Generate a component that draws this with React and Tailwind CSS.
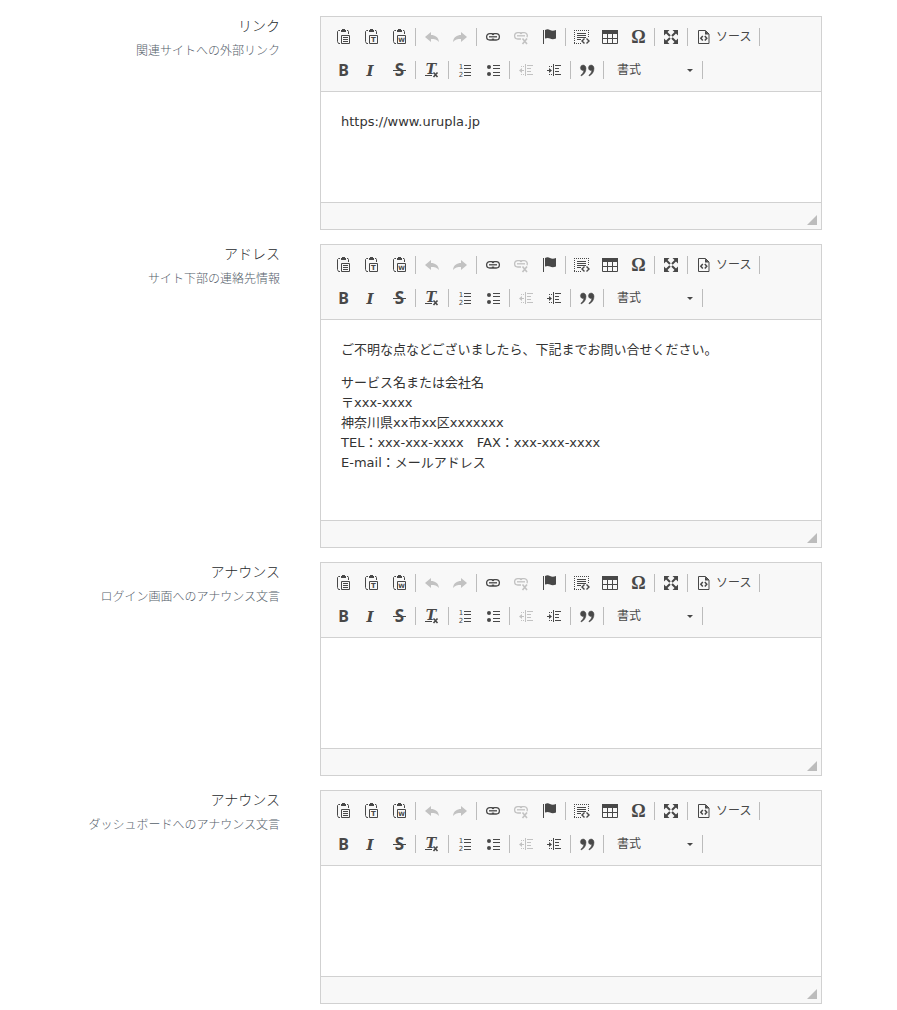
import React from 'react';

const iconClass = 'block size-4 shrink-0 overflow-visible';

function Svg({ children }) {
    return (
        <svg className={iconClass} viewBox="0 0 16 16" fill="none" stroke="currentColor" aria-hidden="true">
            {children}
        </svg>
    );
}

function Letter({ children, x = 8, y = 13, size = 15, family = 'Noto Sans', italic = false, weight = 700 }) {
    return (
        <text
            x={x}
            y={y}
            fontSize={size}
            fontFamily={`"${family}", sans-serif`}
            fontWeight={weight}
            fontStyle={italic ? 'italic' : 'normal'}
            textAnchor="middle"
            fill="currentColor"
            stroke="none"
        >
            {children}
        </text>
    );
}

function Clipboard({ children }) {
    return (
        <Svg>
            <path d="M5 1.500H3.500L2.500 2.500V12.500L3.500 14.500H5M12 1.500h1l.5 1V5" />
            <path d="M6 3V1h1V0h3v1h1v2z" fill="currentColor" stroke="none" />
            <path d="M6.500 6.500h8v8h-8z" />
            {children}
        </Svg>
    );
}

const icons = {
    paste: <Clipboard><path d="M8 8.500h5M8 10.500h5M8 12.500h5" /></Clipboard>,
    pasteText: <Clipboard><Letter x={10.5} y={13} size={7} family="DejaVu Sans">T</Letter></Clipboard>,
    pasteWord: <Clipboard><Letter x={10.5} y={13} size={6} family="DejaVu Sans">W</Letter></Clipboard>,
    undo: <Svg><path d="M1 8 7 3v3c4 0 7.500 2 8 7-2-2.500-4.500-3-8-3v3z" fill="currentColor" stroke="none" /></Svg>,
    redo: <Svg><path d="M15 8 9 3v3c-4 0-7.500 2-8 7 2-2.500 4.500-3 8-3v3z" fill="currentColor" stroke="none" /></Svg>,
    link: (
        <Svg>
            <path strokeWidth="1.300" d="M8.700 6C8.500 5 8 4.600 7 4.600H4.800a3.200 3.200 0 0 0 0 6.400H7c1 0 1.500-.4 1.700-1.400M7.300 6c.2-1 .7-1.400 1.700-1.400h2.200a3.200 3.200 0 0 1 0 6.400H9c-1 0-1.500-.4-1.700-1.400" />
            <path d="M4 7.800h8" strokeWidth="1.300" />
        </Svg>
    ),
    unlink: (
        <Svg>
            <path strokeWidth="1.300" d="M8.700 5C8.500 4 8 3.600 7 3.600H4.800a3.200 3.200 0 0 0 0 6.400H8M7.300 5c.2-1 .7-1.400 1.700-1.400h2.200a3.200 3.200 0 0 1 2.800 4.600" />
            <path d="M4 6.800h8" strokeWidth="1.300" />
            <path d="m9.500 9.500 4.500 5.500M14 9.500l-4.500 5.500" strokeWidth="1.600" />
        </Svg>
    ),
    anchor: (
        <Svg>
            <path d="M2.500 1v14" />
            <path d="M4 1c2-1 3.500-.8 5 0s3.500 1 6 0v8.500c-2.500 1-4.500.8-6 0s-3-.8-5 0z" fill="currentColor" stroke="none" />
        </Svg>
    ),
    selectAll: (
        <Svg>
            <path strokeDasharray="1 1" d="M0 1.500h15M0 3.500h1M14 3.500h1M0 14.500h8M.5 1v14M14.500 1v8" />
            <path d="M3 4.500h9M3 6.500h9M3 8.500h9M3 10.500h4" />
            <path strokeWidth="1.400" d="m10.500 9.500-2.500 2.500 2.500 2.500M12.500 9.500 15 12l-2.500 2.500" />
        </Svg>
    ),
    table: (
        <Svg>
            <path d="M0 1h16v4H0z" fill="currentColor" stroke="none" />
            <path d="M.5 4.500h15v10H.5zM5.500 5v9M10.500 5v9M0 9.500h16" />
        </Svg>
    ),
    specialChar: <Svg><Letter x={8.5} y={14} size={18} family="Liberation Serif">Ω</Letter></Svg>,
    maximize: (
        <Svg>
            <path d="M1 1h5.500L1 6.500zM15 1v5.500L9.500 1zM1 15V9.500L6.500 15zM15 15H9.500L15 9.500z" fill="currentColor" stroke="none" />
            <path strokeWidth="2" d="m3 3 4 4M13 3 9 7M3 13l4-4M13 13 9 9" />
        </Svg>
    ),
    source: (
        <Svg>
            <path d="M2.500 1.500h7l3.500 3.500v9.500H2.500z" />
            <path d="M9 1.500v4h4z" fill="currentColor" stroke="none" />
            <path strokeWidth="1.500" d="M6.800 7 4.800 9.200l2 2.300M8.800 7l2 2.200-2 2.300" />
        </Svg>
    ),
    bold: <Svg><Letter x={8.5} y={14} size={16}>B</Letter></Svg>,
    italic: <Svg><Letter x={7} y={14} size={15} family="DejaVu Serif" italic>I</Letter></Svg>,
    strike: (
        <Svg>
            <Letter x={8.5} y={14} size={17}>S</Letter>
            <path d="M2 8.500h13" />
        </Svg>
    ),
    removeFormat: (
        <Svg>
            <Letter x={7} y={12} size={14} family="DejaVu Serif" italic>T</Letter>
            <path d="M1 13.500h7" />
            <path strokeWidth="1.600" d="m9.500 10.500 4 4.500M13.500 10.500l-4 4.500" />
        </Svg>
    ),
    numberedList: (
        <Svg>
            <Letter x={4} y={7} size={7} family="DejaVu Sans" weight={400}>1</Letter>
            <Letter x={4} y={15} size={7} family="DejaVu Sans" weight={400}>2</Letter>
            <path d="M7 3.500h7M7 6.500h7M7 10.500h7M7 13.500h7" />
        </Svg>
    ),
    bulletedList: (
        <Svg>
            <circle cx="4" cy="5" r="2" fill="currentColor" stroke="none" />
            <circle cx="4" cy="12" r="2" fill="currentColor" stroke="none" />
            <path d="M8 3.500h7M8 6.500h7M8 10.500h7M8 13.500h7" />
        </Svg>
    ),
    outdent: (
        <Svg>
            <path d="M7.500 2v12M9 3.500h6M9 6.500h4M9 9.500h4M9 12.500h6M2 8.500h4M3 4.500h1M5 4.500h1M3 12.500h1M5 12.500h1" />
            <path d="M1 8.500 4 6v5z" fill="currentColor" stroke="none" />
        </Svg>
    ),
    indent: (
        <Svg>
            <path d="M7.500 2v12M9 3.500h6M9 6.500h4M9 9.500h4M9 12.500h6M1 8.500h4M3 4.500h1M5 4.500h1M3 12.500h1M5 12.500h1" />
            <path d="M6 8.500 3 6v5z" fill="currentColor" stroke="none" />
        </Svg>
    ),
    quote: (
        <Svg>
            <path
                d="M4 3a2.800 2.800 0 0 0-.5 5.500c.5.100 1 .1 1.300 0C4.500 10.500 3.500 12 2 13v1c3-1.200 5-4 5-7.500C7 4.500 5.800 3 4 3zM12 3a2.800 2.800 0 0 0-.5 5.500c.5.100 1 .1 1.300 0-.3 2-1.300 3.500-2.800 4.500v1c3-1.200 5-4 5-7.500C15 4.500 13.800 3 12 3z"
                fill="currentColor"
                stroke="currentColor"
                strokeWidth="0.500"
            />
        </Svg>
    ),
};

const topRow = [
    [
        { icon: 'paste', title: '貼り付け' },
        { icon: 'pasteText', title: 'プレーンテキスト貼り付け' },
        { icon: 'pasteWord', title: 'ワード文章から貼り付け' },
    ],
    [
        { icon: 'undo', title: '元に戻す', disabled: true },
        { icon: 'redo', title: 'やり直す', disabled: true },
    ],
    [
        { icon: 'link', title: 'リンク挿入/編集' },
        { icon: 'unlink', title: 'リンクを削除', disabled: true },
        { icon: 'anchor', title: 'アンカー挿入/編集' },
    ],
    [
        { icon: 'selectAll', title: 'すべて選択' },
        { icon: 'table', title: '表' },
        { icon: 'specialChar', title: '特殊文字挿入' },
    ],
    [{ icon: 'maximize', title: '最大化' }],
    [{ icon: 'source', title: 'ソース', label: 'ソース' }],
];

const bottomRow = [
    [
        { icon: 'bold', title: '太字' },
        { icon: 'italic', title: '斜体' },
        { icon: 'strike', title: '打ち消し線' },
    ],
    [{ icon: 'removeFormat', title: '書式を解除' }],
    [
        { icon: 'numberedList', title: '番号付きリスト' },
        { icon: 'bulletedList', title: '番号無しリスト' },
    ],
    [
        { icon: 'outdent', title: 'インデント解除', disabled: true },
        { icon: 'indent', title: 'インデント' },
    ],
    [{ icon: 'quote', title: 'ブロック引用文' }],
];

function ToolGroup({ items }) {
    return (
        <div className="flex items-center">
            {items.map(item => (
                <button
                    key={item.icon}
                    type="button"
                    title={item.title}
                    aria-label={item.title}
                    disabled={item.disabled}
                    className="flex h-7 items-center gap-1 px-1.5 text-xs hover:bg-[#e5e5e5] disabled:opacity-30"
                >
                    {icons[item.icon]}
                    {item.label && <span>{item.label}</span>}
                </button>
            ))}
            <Separator />
        </div>
    );
}

function Separator() {
    return <span className="mx-0.5 h-[18px] w-px bg-[#bcbcbc]" />;
}

function Toolbar() {
    return (
        <div className="flex flex-col gap-[5px] border-b border-[#d1d1d1] bg-[#f8f8f8] px-2 pt-1.5 pb-[7px] text-[#484848]">
            <div className="flex flex-wrap items-center">
                {topRow.map((items, i) => <ToolGroup key={i} items={items} />)}
            </div>
            <div className="flex flex-wrap items-center">
                {bottomRow.map((items, i) => <ToolGroup key={i} items={items} />)}
                <div className="relative">
                    <select
                        aria-label="書式"
                        className="block h-7 w-[94px] appearance-none bg-transparent pl-[11px] text-xs"
                    >
                        <option>書式</option>
                    </select>
                    <svg className="pointer-events-none absolute top-3 right-[7px] h-1 w-1.5" viewBox="0 0 6 4" fill="currentColor" aria-hidden="true">
                        <path d="M0 1h6L3 4z" />
                    </svg>
                </div>
                <Separator />
            </div>
        </div>
    );
}

function Editor({ id, bodyClass, children }) {
    return (
        <div className="min-w-0 flex-1 border border-[#d1d1d1] bg-white">
            <Toolbar />
            <div
                role="textbox"
                aria-multiline="true"
                aria-labelledby={id}
                contentEditable
                suppressContentEditableWarning
                className={`p-5 font-["DejaVu_Sans","Noto_Sans_CJK_JP",sans-serif] text-[13px] leading-5 text-[#333] outline-none ${bodyClass}`}
            >
                {children}
            </div>
            <div className="flex h-[27px] items-end justify-end border-t border-[#d1d1d1] bg-[#f8f8f8] p-1">
                <svg className="size-2.5 cursor-se-resize text-[#bcbcbc]" viewBox="0 0 10 10" fill="currentColor" aria-hidden="true">
                    <path d="M10 0v10H0z" />
                </svg>
            </div>
        </div>
    );
}

const fields = [
    {
        id: 'link',
        label: 'リンク',
        help: '関連サイトへの外部リンク',
        bodyClass: 'min-h-[110px]',
        content: <p>https://www.urupla.jp</p>,
    },
    {
        id: 'address',
        label: 'アドレス',
        help: 'サイト下部の連絡先情報',
        bodyClass: 'min-h-[200px]',
        content: (
            <>
                <p className="mb-[13px]">ご不明な点などございましたら、下記までお問い合せください。</p>
                <p>
                    サービス名または会社名<br />
                    〒xxx-xxxx<br />
                    神奈川県xx市xx区xxxxxxx<br />
                    TEL：xxx-xxx-xxxx　FAX：xxx-xxx-xxxx<br />
                    E-mail：メールアドレス
                </p>
            </>
        ),
    },
    { id: 'login-announce', label: 'アナウンス', help: 'ログイン画面へのアナウンス文言', bodyClass: 'min-h-[110px]' },
    { id: 'dashboard-announce', label: 'アナウンス', help: 'ダッシュボードへのアナウンス文言', bodyClass: 'min-h-[110px]' },
];

export default function App() {
    return (
        <form
            lang="ja"
            className='flex flex-col gap-3.5 bg-white pt-4 pr-[75px] font-["Noto_Sans","Noto_Sans_CJK_JP",sans-serif]'
        >
            {fields.map(field => (
                <div key={field.id} className="flex gap-10">
                    <div className="w-[280px] shrink-0 text-right font-light">
                        <label id={field.id} className="block text-sm leading-5 text-[#26292c]">{field.label}</label>
                        <p className="mt-[7px] text-xs leading-4 text-[#56616b]">{field.help}</p>
                    </div>
                    <Editor id={field.id} bodyClass={field.bodyClass}>{field.content}</Editor>
                </div>
            ))}
        </form>
    );
}
